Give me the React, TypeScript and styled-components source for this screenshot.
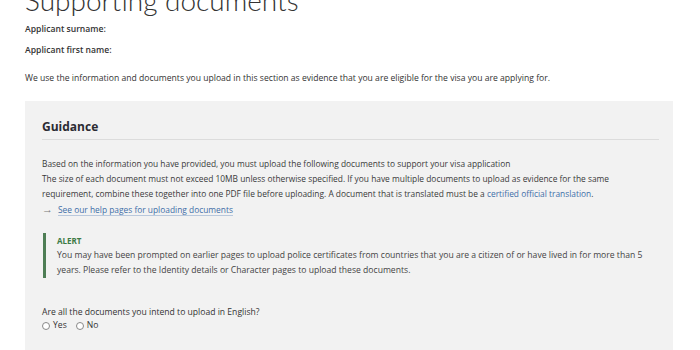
import styled, { createGlobalStyle } from "styled-components";

const GlobalStyle = createGlobalStyle`
  html, body {
    margin: 0;
    padding: 0;
    background: #ffffff;
  }
  body {
    font-family: "Open Sans", "Noto Sans", Arial, sans-serif;
    color: #333333;
    font-size: 8.6px;
  }
`;

const Page = styled.div`
  width: 700px;
  height: 350px;
  overflow: hidden;
  padding: 0 27px 0 25px;
  box-sizing: border-box;
`;

const Title = styled.h1`
  font-family: "Lato", "Open Sans", sans-serif;
  font-weight: 300;
  font-size: 28px;
  line-height: 28px;
  margin: -14px 0 0 0;
  color: #333;
`;

const Field = styled.p<{ gap: number }>`
  margin: ${(p) => p.gap}px 0 0 0;
  font-size: 8.6px;
  line-height: 12px;
  font-weight: 600;
  color: #333;
`;

const Intro = styled.p`
  margin: 16px 0 0 0;
  font-size: 8.6px;
  line-height: 12px;
  color: #333;
`;

const Panel = styled.section`
  margin-top: 17px;
  background: #f2f2f2;
  padding: 18px 14px 20px 17px;
`;

const PanelTitle = styled.h2`
  margin: 0;
  font-size: 12px;
  line-height: 16px;
  font-weight: 700;
  color: #2b2b33;
  padding-bottom: 4px;
  border-bottom: 1px solid #dcdcdc;
`;

const Body = styled.div`
  margin-top: 16px;
  font-size: 8.4px;
  line-height: 15px;
  color: #3a3a3a;
`;

const Line = styled.p`
  margin: 0;
`;

const Link = styled.a`
  color: #3f6ea8;
  text-decoration: none;
`;

const HelpLink = styled(Link)`
  border-bottom: 1px solid #b9c8dc;
`;

const Arrow = styled.span`
  color: #777;
  font-size: 11px;
  margin-right: 5px;
`;

const Alert = styled.div`
  margin-top: 16px;
  margin-left: 1px;
  border-left: 3px solid #4e7e55;
  padding: 0 0 0 11px;
  font-size: 8.6px;
  line-height: 15px;
  color: #444;
`;

const AlertLabel = styled.div`
  font-weight: 700;
  color: #3d7a45;
  font-size: 8px;
`;

const Question = styled.div`
  margin-top: 27px;
  font-size: 8.6px;
  line-height: 14px;
  color: #333;
`;

const Options = styled.div`
  display: flex;
  gap: 9px;
  line-height: 13px;
`;

const Option = styled.label`
  display: flex;
  align-items: center;
  gap: 3px;
  color: #333;
`;

const Radio = styled.span`
  width: 6px;
  height: 6px;
  border: 1px solid #888;
  border-radius: 50%;
  background: #fff;
`;

export default function App() {
  return (
    <Page>
      <GlobalStyle />
      <Title>Supporting documents</Title>
      <Field gap={9}>Applicant surname:</Field>
      <Field gap={9}>Applicant first name:</Field>
      <Intro>
        We use the information and documents you upload in this section as
        evidence that you are eligible for the visa you are applying for.
      </Intro>
      <Panel>
        <PanelTitle>Guidance</PanelTitle>
        <Body>
          <Line>
            Based on the information you have provided, you must upload the
            following documents to support your visa application
          </Line>
          <Line>
            The size of each document must not exceed 10MB unless otherwise
            specified. If you have multiple documents to upload as evidence for
            the same requirement, combine these together into one PDF file
            before uploading. A document that is translated must be a{" "}
            <Link href="#">certified official translation</Link>.
          </Line>
          <Line>
            <Arrow>→</Arrow>
            <HelpLink href="#">See our help pages for uploading documents</HelpLink>
          </Line>
        </Body>
        <Alert>
          <AlertLabel>ALERT</AlertLabel>
          You may have been prompted on earlier pages to upload police
          certificates from countries that you are a citizen of or have lived
          in for more than 5 years. Please refer to the Identity details or
          Character pages to upload these documents.
        </Alert>
        <Question>
          Are all the documents you intend to upload in English?
          <Options>
            <Option>
              <Radio />
              Yes
            </Option>
            <Option>
              <Radio />
              No
            </Option>
          </Options>
        </Question>
      </Panel>
    </Page>
  );
}
